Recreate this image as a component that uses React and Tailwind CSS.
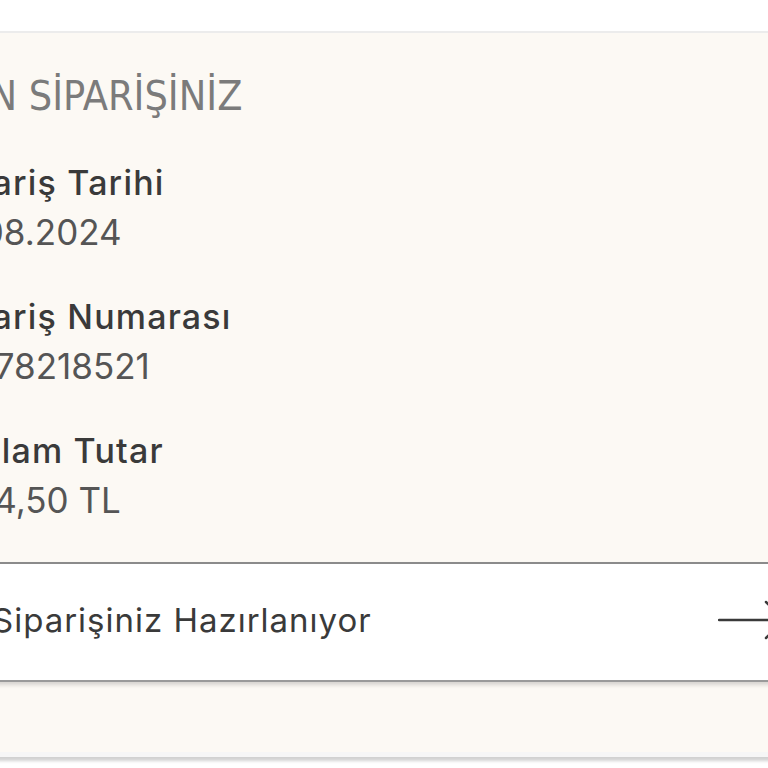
const order = [
  { label: "Sipariş Tarihi", value: "12.08.2024" },
  { label: "Sipariş Numarası", value: "#1078218521" },
  { label: "Toplam Tutar", value: "1234,50 TL" },
];

const body = { fontFamily: "Inter, 'Noto Sans', sans-serif" };
const heading = {
  fontFamily: "'Liberation Sans Narrow', 'DejaVu Sans Condensed', Roboto, sans-serif",
};

const ArrowLong = () => (
  <svg width="68" height="40" viewBox="0 0 68 40" fill="none" className="text-[#3a3a3a]">
    <path d="M1 20H66" stroke="currentColor" strokeWidth="2.5" strokeLinecap="round" />
    <path d="M48 2L66 20L48 38" stroke="currentColor" strokeWidth="2.5" strokeLinecap="round" strokeLinejoin="round" />
  </svg>
);

const App = () => {
  return (
    <div className="w-[768px] h-[768px] overflow-hidden bg-white pt-[31px]" style={body}>
      <div className="-mx-[100px] h-[726px] border-t-2 border-[#ececec] border-b-[5px] border-b-[#f6f6f6] bg-[#fcf9f4] shadow-[0_4px_3px_rgba(0,0,0,0.18)] flex flex-col">
        <div className="pl-[37px] pt-[41px]">
          <h2 className="text-[41px] leading-[44px] font-normal text-[#7b7b7b]" style={heading}>
            SON SİPARİŞİNİZ
          </h2>

          <div className="mt-[45px] flex flex-col gap-[43px]">
            {order.map((item) => (
              <div key={item.label}>
                <p className="text-[34px] leading-[40px] font-medium tracking-[0.035em] text-[#3a3a3a]">
                  {item.label}
                </p>
                <p className="mt-[7px] text-[35px] leading-[44px] text-[#555555]">{item.value}</p>
              </div>
            ))}
          </div>
        </div>

        <button className="mt-[40px] h-[120px] w-full flex items-center justify-between border-t-2 border-[#8b8b8b] border-b-2 border-b-[#9a9a9a] bg-white pl-[92px] pr-[82px] pb-[4px] shadow-[0_3px_4px_rgba(0,0,0,0.15)]">
          <span className="text-[33px] leading-[40px] tracking-[0.03em] text-[#3a3a3a]">
            Siparişiniz Hazırlanıyor
          </span>
          <ArrowLong />
        </button>
      </div>
    </div>
  );
};

export default App;
